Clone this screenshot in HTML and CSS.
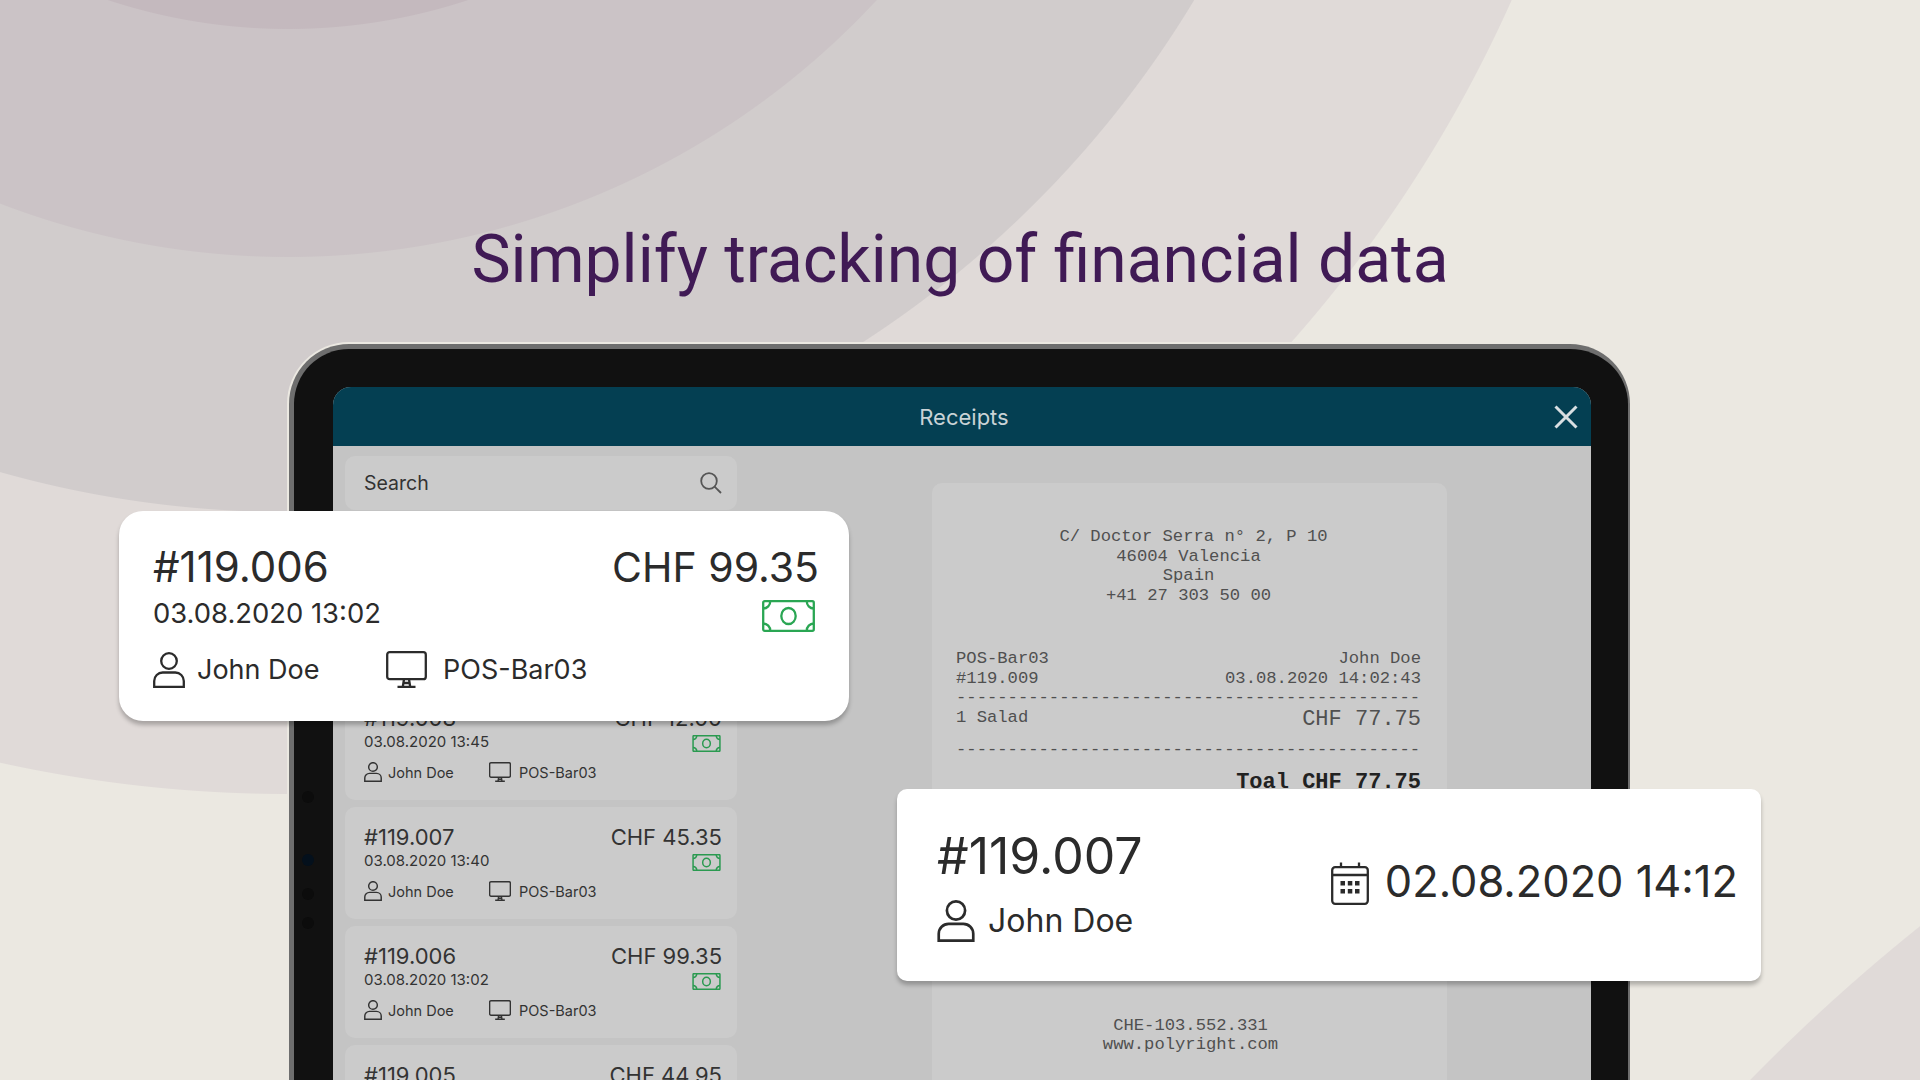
FILE: index.html
```html
<!DOCTYPE html>
<html>
<head>
<title>Receipts</title>
<link rel="stylesheet" href="styles.css">
</head>
<body>

<svg class="iconDefs" width="0" height="0">
  <symbol id="icoUser" viewBox="0 0 32 36">
    <circle cx="16" cy="9" r="7.8" />
    <path d="M1.2 34.8 V29 a8.5 8.5 0 0 1 8.5 -8.5 h12.6 a8.5 8.5 0 0 1 8.5 8.5 v5.8 z" />
  </symbol>
  <symbol id="icoMonitor" viewBox="0 0 41 37">
    <rect x="1.2" y="1.2" width="38.6" height="27" rx="2.5" />
    <path d="M18 28.2 L16.8 35.8 M23 28.2 L24.2 35.8 M11.5 35.8 H29.5 M17.4 32 H23.6" />
  </symbol>
  <symbol id="icoMoney" viewBox="0 0 53 32">
    <rect x="1.2" y="1.2" width="50.6" height="29.6" rx="1.5" />
    <ellipse cx="26.5" cy="16" rx="7.2" ry="8" />
    <path d="M1.2 8.5 a7 7 0 0 0 7 -7.3 M51.8 8.5 a7 7 0 0 1 -7 -7.3 M1.2 23.5 a7 7 0 0 1 7 7.3 M51.8 23.5 a7 7 0 0 0 -7 7.3" />
  </symbol>
  <symbol id="icoCalendar" viewBox="0 0 38 43">
    <rect x="1.2" y="5.2" width="35.6" height="36.6" rx="3" />
    <path d="M1.2 13 H36.8 M10 0.5 V5.2 M28 0.5 V5.2" />
    <path class="calDots" d="M9.5 19 h4.5 v4.5 h-4.5 z M16.8 19 h4.5 v4.5 h-4.5 z M24 19 h4.5 v4.5 h-4.5 z M9.5 27 h4.5 v4.5 h-4.5 z M16.8 27 h4.5 v4.5 h-4.5 z M24 27 h4.5 v4.5 h-4.5 z" />
  </symbol>
</svg>

<div class="scene">
  <h1 class="headline">Simplify tracking of financial data</h1>

  <div class="tablet">
    <span class="camDot camDot1"></span>
    <span class="camDot camDot2"></span>
    <span class="camDot camDot3"></span>
    <span class="camDot camDot4"></span>

    <div class="screen">
      <div class="screenHeader">
        <span>Receipts</span>
        <svg class="closeIcon" viewBox="0 0 24 24"><path d="M1.5 1.5 L22.5 22.5 M22.5 1.5 L1.5 22.5" /></svg>
      </div>

      <div class="screenBody">
        <div class="listPane">
          <div class="searchBox">
            <span>Search</span>
            <svg class="searchIcon" viewBox="0 0 22 22"><circle cx="9" cy="9" r="7.8" /><path d="M14.6 14.6 L21 21" /></svg>
          </div>

          <div class="receiptItem">
            <div class="itemId">#119.009</div>
            <div class="itemAmount">CHF 27.10</div>
            <div class="itemDate">03.08.2020 14:02</div>
            <svg class="icoMoney"><use href="#icoMoney" /></svg>
            <div class="itemMeta">
              <svg class="icoUser"><use href="#icoUser" /></svg><span class="metaUser">John Doe</span>
              <svg class="icoMonitor"><use href="#icoMonitor" /></svg><span>POS-Bar03</span>
            </div>
          </div>
          <div class="receiptItem">
            <div class="itemId">#119.008</div>
            <div class="itemAmount">CHF 12.00</div>
            <div class="itemDate">03.08.2020 13:45</div>
            <svg class="icoMoney"><use href="#icoMoney" /></svg>
            <div class="itemMeta">
              <svg class="icoUser"><use href="#icoUser" /></svg><span class="metaUser">John Doe</span>
              <svg class="icoMonitor"><use href="#icoMonitor" /></svg><span>POS-Bar03</span>
            </div>
          </div>
          <div class="receiptItem">
            <div class="itemId">#119.007</div>
            <div class="itemAmount">CHF 45.35</div>
            <div class="itemDate">03.08.2020 13:40</div>
            <svg class="icoMoney"><use href="#icoMoney" /></svg>
            <div class="itemMeta">
              <svg class="icoUser"><use href="#icoUser" /></svg><span class="metaUser">John Doe</span>
              <svg class="icoMonitor"><use href="#icoMonitor" /></svg><span>POS-Bar03</span>
            </div>
          </div>
          <div class="receiptItem">
            <div class="itemId">#119.006</div>
            <div class="itemAmount">CHF 99.35</div>
            <div class="itemDate">03.08.2020 13:02</div>
            <svg class="icoMoney"><use href="#icoMoney" /></svg>
            <div class="itemMeta">
              <svg class="icoUser"><use href="#icoUser" /></svg><span class="metaUser">John Doe</span>
              <svg class="icoMonitor"><use href="#icoMonitor" /></svg><span>POS-Bar03</span>
            </div>
          </div>
          <div class="receiptItem">
            <div class="itemId">#119.005</div>
            <div class="itemAmount">CHF 44.95</div>
          </div>
        </div>

        <div class="paper">
          <div class="paperAddress">
            <div class="paperStreet">C/ Doctor Serra n&deg; 2, P 10</div>
            <div>46004 Valencia</div>
            <div>Spain</div>
            <div>+41 27 303 50 00</div>
          </div>
          <div class="paperRow"><span>POS-Bar03</span><span>John Doe</span></div>
          <div class="paperRow"><span>#119.009</span><span>03.08.2020 14:02:43</span></div>
          <div class="paperRule">---------------------------------------------</div>
          <div class="paperRow paperLine"><span>1 Salad</span><span class="paperPrice">CHF 77.75</span></div>
          <div class="paperRule">---------------------------------------------</div>
          <div class="paperTotal">Toal CHF 77.75</div>
          <div class="paperFooter">
            <div>CHE-103.552.331</div>
            <div>www.polyright.com</div>
          </div>
        </div>
      </div>
    </div>
  </div>

  <div class="bigCard cardSale">
    <div class="saleTop">
      <div class="saleId">#119.006</div>
      <div class="saleAmount">CHF 99.35</div>
    </div>
    <div class="saleMid">
      <div class="saleDate">03.08.2020 13:02</div>
      <svg class="saleMoney"><use href="#icoMoney" /></svg>
    </div>
    <div class="saleMeta">
      <svg class="saleUser"><use href="#icoUser" /></svg><span class="saleName">John Doe</span>
      <svg class="saleMonitor"><use href="#icoMonitor" /></svg><span>POS-Bar03</span>
    </div>
  </div>

  <div class="bigCard cardDetail">
    <div class="detailLeft">
      <div class="detailId">#119.007</div>
      <div class="detailUser">
        <svg class="detailUserIco"><use href="#icoUser" /></svg><span>John Doe</span>
      </div>
    </div>
    <div class="detailDate">
      <svg class="detailCal"><use href="#icoCalendar" /></svg><span>02.08.2020 14:12</span>
    </div>
  </div>
</div>

</body>
</html>
```

FILE: styles.css
```css
* {
  box-sizing: border-box;
}
html, body {
  margin: 0;
  padding: 0;
}
body {
  font-family: "Inter", "Liberation Sans", sans-serif;
  color: #2b2b2b;
}
.iconDefs {
  position: absolute;
}
svg {
  display: block;
  fill: none;
  stroke: currentColor;
  stroke-width: 2.3;
  flex: none;
}
.calDots {
  fill: currentColor;
  stroke: none;
}

.scene {
  position: relative;
  width: 1920px;
  height: 1080px;
  overflow: hidden;
  display: flex;
  flex-direction: column;
  background:
    radial-gradient(circle at 3100px 2400px, #e0dad8 1887.5px, rgba(224, 218, 216, 0) 1888.5px),
    radial-gradient(circle at 288px -546px,
      #c4b9be 574.5px, #cbc3c6 575.5px,
      #cbc3c6 802.5px, #d1cccc 803.5px,
      #d1cccc 1057.5px, #e0dad8 1058.5px,
      #e0dad8 1339.5px, #ebe8e1 1340.5px);
}
.headline {
  margin: 0;
  padding-top: 218px;
  height: 344px;
  text-align: center;
  font-family: "Roboto", sans-serif;
  font-weight: 400;
  font-size: 66px;
  line-height: 84px;
  color: #401a55;
}

.tablet {
  position: relative;
  flex: 1;
  min-height: 0;
  margin: 0 290px 0 289px;
  padding: 38px 37px 0 39px;
  display: flex;
  background: #111111;
  border-style: solid;
  border-color: #6e6e6e;
  border-width: 5px 2px 0 5px;
  border-radius: 60px 60px 0 0;
  box-shadow: 0 0 0 2px #ebe8e1;
}
.camDot {
  position: absolute;
  left: 8px;
  width: 12px;
  height: 12px;
  border-radius: 50%;
  background: #0c0c0c;
}
.camDot1 { top: 442px; }
.camDot2 { top: 505px; background: #04101c; }
.camDot3 { top: 539px; }
.camDot4 { top: 568px; }

.screen {
  flex: 1;
  min-width: 0;
  display: flex;
  flex-direction: column;
  background: #c4c4c4;
  border-radius: 18px 18px 0 0;
  overflow: hidden;
}
.screenHeader {
  position: relative;
  height: 59px;
  padding-left: 4px;
  display: flex;
  align-items: center;
  justify-content: center;
  background: #043f52;
  color: #c9d3d6;
  font-size: 22px;
  flex: none;
}
.closeIcon {
  position: absolute;
  top: 18px;
  right: 13px;
  width: 24px;
  height: 24px;
  color: #d9dfe2;
  stroke-width: 3;
}
.screenBody {
  flex: 1;
  min-height: 0;
  display: flex;
  align-items: flex-start;
}

.listPane {
  width: 392px;
  margin: 10px 0 0 12px;
  flex: none;
}
.searchBox {
  height: 54px;
  margin-bottom: 59px;
  padding: 0 15px 0 19px;
  display: flex;
  align-items: center;
  justify-content: space-between;
  background: #cbcbcb;
  border-radius: 10px;
  font-size: 19.5px;
  color: #333333;
}
.searchIcon {
  width: 22px;
  height: 22px;
  color: #555555;
  stroke-width: 1.8;
}
.receiptItem {
  display: grid;
  grid-template-columns: 1fr auto;
  justify-items: start;
  height: 112px;
  margin-bottom: 7px;
  padding: 16px 15px 0 19px;
  background: #cbcbcb;
  border-radius: 10px;
  color: #333333;
  align-content: start;
}
.itemId, .itemAmount {
  font-size: 22px;
  line-height: 28px;
}
.itemAmount {
  justify-self: end;
}
.itemDate {
  font-size: 15px;
  line-height: 20px;
}
.icoMoney {
  justify-self: end;
  width: 29px;
  height: 17px;
  margin: 3px 1px 0 0;
  color: #2a9a50;
  stroke-width: 2.8;
}
.itemMeta {
  grid-column: 1 / 3;
  display: flex;
  align-items: center;
  margin-top: 10px;
  font-size: 14.5px;
}
.icoUser {
  width: 18px;
  height: 20px;
  margin-right: 6px;
  stroke-width: 2.6;
}
.metaUser {
  flex: 0 0 101px;
}
.icoMonitor {
  width: 22px;
  height: 20px;
  margin-right: 8px;
  stroke-width: 2.6;
}

.paper {
  width: 515px;
  height: 640px;
  margin: 37px 0 0 195px;
  padding: 44px 26px 0 24px;
  flex: none;
  background: #cbcbcb;
  border-radius: 10px;
  font-family: "Liberation Mono", monospace;
  font-size: 17.2px;
  line-height: 19.7px;
  color: #505050;
}
.paperAddress {
  text-align: center;
  margin-bottom: 43px;
}
.paperStreet {
  padding-left: 10px;
}
.paperRow {
  display: flex;
  justify-content: space-between;
}
.paperRule {
  white-space: nowrap;
}
.paperLine {
  height: 32px;
}
.paperPrice {
  font-size: 22px;
  line-height: 24px;
}
.paperTotal {
  margin-top: 11px;
  text-align: right;
  font-size: 22px;
  font-weight: bold;
  line-height: 24px;
  color: #222222;
}
.paperFooter {
  margin-top: 221px;
  padding-left: 4px;
  text-align: center;
}

/* cards lying over the tablet */
.bigCard {
  position: absolute;
  background: #ffffff;
  box-shadow: 0 4px 4px rgba(0, 0, 0, 0.25);
}
.cardSale {
  left: 119px;
  top: 511px;
  width: 730px;
  height: 210px;
  padding: 32px 30px 0 34px;
  border-radius: 24px;
}
.saleTop, .saleMid {
  display: flex;
  justify-content: space-between;
}
.saleId {
  font-size: 42px;
  line-height: 48px;
}
.saleAmount {
  font-size: 41px;
  line-height: 48px;
}
.saleMid {
  height: 49px;
}
.saleDate {
  margin-top: 5px;
  font-size: 27.4px;
  line-height: 34px;
}
.saleMoney {
  width: 53px;
  height: 32px;
  margin: 9px 4px 0 0;
  color: #2aa653;
}
.saleMeta {
  display: flex;
  align-items: center;
  margin-top: 11px;
  font-size: 27px;
}
.saleUser {
  width: 32px;
  height: 36px;
  margin-right: 12px;
}
.saleName {
  flex: 0 0 189px;
}
.saleMonitor {
  width: 41px;
  height: 37px;
  margin-right: 16px;
}
.cardDetail {
  left: 897px;
  top: 789px;
  width: 864px;
  height: 192px;
  padding: 0 23px 0 40px;
  display: flex;
  justify-content: space-between;
  align-items: center;
  border-radius: 10px;
}
.detailLeft {
  padding-bottom: 3px;
}
.detailId {
  font-size: 50px;
  line-height: 60px;
}
.detailUser {
  display: flex;
  align-items: center;
  gap: 13px;
  margin-top: 14px;
  font-size: 32px;
}
.detailUserIco {
  width: 38px;
  height: 42px;
}
.detailDate {
  display: flex;
  align-items: center;
  gap: 16px;
  margin-bottom: 8px;
  font-size: 43.4px;
}
.detailCal {
  width: 38px;
  height: 43px;
  margin-top: 4px;
}
```
